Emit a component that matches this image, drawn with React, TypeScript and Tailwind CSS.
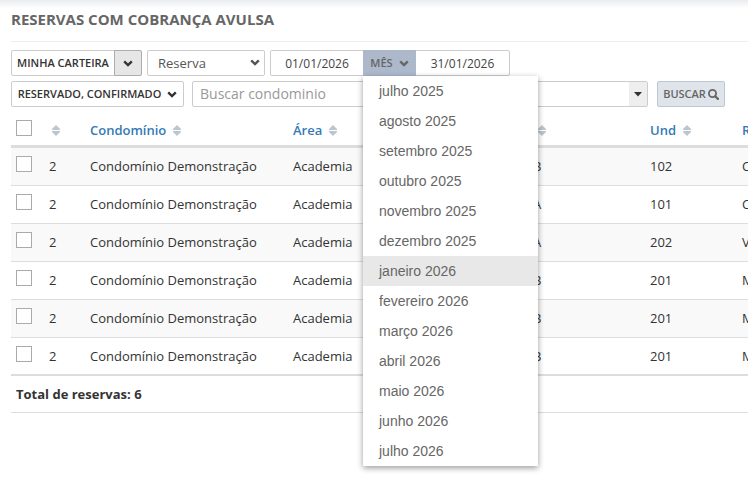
import { useState } from "react";

const months = [
  "julho 2025",
  "agosto 2025",
  "setembro 2025",
  "outubro 2025",
  "novembro 2025",
  "dezembro 2025",
  "janeiro 2026",
  "fevereiro 2026",
  "março 2026",
  "abril 2026",
  "maio 2026",
  "junho 2026",
  "julho 2026",
];

const rows = [
  { qty: 2, condo: "Condomínio Demonstração", area: "Academia", block: "Bloco B", unit: "102", person: "C" },
  { qty: 2, condo: "Condomínio Demonstração", area: "Academia", block: "Bloco A", unit: "101", person: "C" },
  { qty: 2, condo: "Condomínio Demonstração", area: "Academia", block: "Bloco A", unit: "202", person: "V" },
  { qty: 2, condo: "Condomínio Demonstração", area: "Academia", block: "Bloco B", unit: "201", person: "M" },
  { qty: 2, condo: "Condomínio Demonstração", area: "Academia", block: "Bloco B", unit: "201", person: "M" },
  { qty: 2, condo: "Condomínio Demonstração", area: "Academia", block: "Bloco B", unit: "201", person: "M" },
];

function Chevron({ className = "" }: { className?: string }) {
  return (
    <svg viewBox="0 0 10 7" className={`h-[7px] w-[10px] shrink-0 ${className}`} fill="none" aria-hidden="true">
      <path d="M1.2 1.3 5 5 8.8 1.3" stroke="currentColor" strokeWidth="2.4" />
    </svg>
  );
}

function SearchIcon() {
  return (
    <svg viewBox="0 0 11 11" className="h-[11px] w-[11px] shrink-0" fill="none" aria-hidden="true">
      <circle cx="4.5" cy="4.5" r="3.6" stroke="currentColor" strokeWidth="1.8" />
      <path d="m7.2 7.2 2.7 2.7" stroke="currentColor" strokeWidth="2.2" strokeLinecap="round" />
    </svg>
  );
}

function SortIcon() {
  return (
    <svg viewBox="0 0 8 11" className="h-[11px] w-2 shrink-0 text-[#bcc6ce]" aria-hidden="true">
      <path d="M4 0 8 4v1H0V4zM4 11 0 7V6h8v1z" fill="currentColor" />
    </svg>
  );
}

function Header({ label }: { label: string }) {
  return (
    <th scope="col" className="pt-2 align-top">
      <button
        type="button"
        aria-label={label ? undefined : "Ordenar"}
        className={`flex h-5 items-center gap-[7px] font-semibold text-[#337ab7] ${label ? "" : "pl-[3px]"}`}
      >
        {label}
        <SortIcon />
      </button>
    </th>
  );
}

function Check({ label }: { label: string }) {
  return (
    <input
      type="checkbox"
      aria-label={label}
      className="block h-4 w-4 appearance-none border border-[#aaa] bg-white checked:bg-[#337ab7]"
    />
  );
}

const box = "h-[26px] rounded-[2px] border border-[#ccc] bg-white";

export default function App() {
  const [month, setMonth] = useState("janeiro 2026");
  return (
    <main className="min-h-screen overflow-hidden bg-white font-['Open_Sans','Noto_Sans',sans-serif] text-[13px] leading-5 text-[#333]">
      <div className="h-2 bg-linear-to-b from-[#e9ebee] to-white" />
      <div className="pl-[11px]">
        <h1 className="h-[34px] border-b border-[#eee] text-[15px] leading-[22px] font-bold text-[#666]">
          RESERVAS COM COBRANÇA AVULSA
        </h1>

        <form className="pt-2" onSubmit={(e) => e.preventDefault()}>
          <div className="flex gap-[5px]">
            <div className="flex">
              <button type="button" className={`${box} w-[104px] rounded-r-none text-center text-[11px] font-semibold whitespace-nowrap`}>
                MINHA CARTEIRA
              </button>
              <button
                type="button"
                aria-label="Abrir carteiras"
                className="-ml-px flex h-[26px] w-7 items-center justify-center rounded-r-[2px] border border-[#adadad] bg-[#e6e6e6]"
              >
                <Chevron />
              </button>
            </div>
            <div className="relative w-[118px]">
              <select aria-label="Tipo" className={`${box} w-full appearance-none pl-[10px] text-[13px] text-[#555]`}>
                <option>Reserva</option>
                <option>Evento</option>
              </select>
              <Chevron className="pointer-events-none absolute top-[9px] right-[5px] text-[#555]" />
            </div>
            <div className="flex">
              <input
                aria-label="Data inicial"
                defaultValue="01/01/2026"
                className={`${box} w-[94px] rounded-r-none text-center text-xs text-[#444]`}
              />
              <div className="relative -ml-px">
                <button
                  type="button"
                  aria-haspopup="listbox"
                  className="flex h-[26px] w-[53px] items-center justify-center gap-[6px] bg-[#adb8cb] text-[11px] font-semibold text-[#666]"
                >
                  MÊS
                  <Chevron />
                </button>
                <ul
                  role="listbox"
                  aria-label="Mês"
                  className="absolute top-full left-0 z-10 w-[175px] bg-white font-['Liberation_Sans',Arial,sans-serif] text-sm text-[#666] shadow-[0_2px_6px_rgba(0,0,0,0.4)]"
                >
                  {months.map((m, i) => (
                    <li
                      key={i}
                      role="option"
                      aria-selected={m === month}
                      onClick={() => setMonth(m)}
                      className={`h-[30px] cursor-pointer pl-4 leading-[30px] ${m === month ? "bg-[#e8e8e8]" : ""}`}
                    >
                      {m}
                    </li>
                  ))}
                </ul>
              </div>
              <input
                aria-label="Data final"
                defaultValue="31/01/2026"
                className={`${box} -ml-px w-[95px] rounded-l-none text-center text-xs text-[#444]`}
              />
            </div>
          </div>

          <div className="mt-[5px] flex">
            <button
              type="button"
              className={`${box} flex w-[173px] items-center justify-center gap-[6px] text-[11px] font-semibold whitespace-nowrap`}
            >
              RESERVADO, CONFIRMADO
              <Chevron />
            </button>
            <div className={`${box} ml-2 flex w-[456px]`}>
              <input
                aria-label="Condomínio"
                placeholder="Buscar condominio"
                className="min-w-0 flex-1 pl-[7px] text-sm placeholder:text-[#999]"
              />
              <button type="button" aria-label="Listar condomínios" className="flex w-[18px] items-center justify-center bg-[#eee]">
                <svg viewBox="0 0 8 5" className="h-[5px] w-2" aria-hidden="true">
                  <path d="M0 0h8L4 4.5z" fill="#333" />
                </svg>
              </button>
            </div>
            <button
              type="submit"
              className="ml-[9px] flex h-[26px] w-[68px] items-center justify-center gap-[2px] rounded-[2px] border border-[#bcc8d4] bg-[#dfe4ea] text-[11px] font-semibold text-[#666]"
            >
              BUSCAR
              <SearchIcon />
            </button>
          </div>
        </form>

        <div className="mt-[5px] overflow-hidden">
          <table className="w-full min-w-[900px] table-fixed border-separate border-spacing-0 text-left">
            <colgroup>
              <col className="w-[38px]" />
              <col className="w-[41px]" />
              <col className="w-[203px]" />
              <col className="w-[203px]" />
              <col className="w-[154px]" />
              <col className="w-[92px]" />
              <col />
            </colgroup>
            <thead>
              <tr className="h-[36px] [&>th]:border-b-[3px] [&>th]:border-[#ddd]">
                <th scope="col" className="pt-2 pl-[5px] align-top">
                  <Check label="Selecionar todas" />
                </th>
                <Header label="" />
                <Header label="Condomínio" />
                <Header label="Área" />
                <Header label="Bloco" />
                <Header label="Und" />
                <Header label="Responsável" />
              </tr>
            </thead>
            <tbody>
              {rows.map((r, i) => (
                <tr
                  key={i}
                  className="h-[38px] odd:bg-[#f9f9f9] [&>td]:border-b [&>td]:border-[#ddd] [&>td]:pt-2 [&>td]:align-top last:[&>td]:border-b-2"
                >
                  <td className="pl-[5px]">
                    <Check label={`Selecionar reserva ${i + 1}`} />
                  </td>
                  <td>{r.qty}</td>
                  <td>{r.condo}</td>
                  <td>{r.area}</td>
                  <td>{r.block}</td>
                  <td>{r.unit}</td>
                  <td>{r.person}</td>
                </tr>
              ))}
            </tbody>
            <tfoot>
              <tr className="h-[37px]">
                <td colSpan={7} className="border-b border-[#ddd] pt-2 pl-[5px] align-top font-bold">
                  Total de reservas: {rows.length}
                </td>
              </tr>
            </tfoot>
          </table>
        </div>
      </div>
    </main>
  );
}
